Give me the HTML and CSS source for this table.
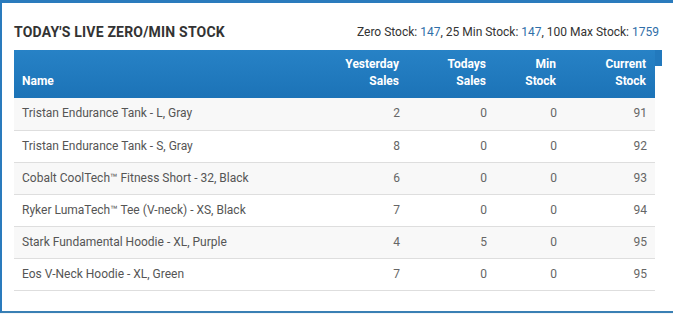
FILE: index.html
```html
<!DOCTYPE html>
<html>
<head>
<meta charset="utf-8">
<link rel="stylesheet" href="styles.css">
</head>
<body>
<div class="panel">
  <div class="panel-head">
    <h2 class="title">TODAY'S LIVE ZERO/MIN STOCK</h2>
    <div class="stats">Zero Stock: <span class="num">147</span>, 25 Min Stock: <span class="num">147</span>, 100 Max Stock: <span class="num">1759</span></div>
  </div>
  <div class="table-wrap">
    <span class="head-tab"></span>
    <table class="stock">
      <thead>
        <tr>
          <th class="name">Name</th>
          <th class="c1">Yesterday<br>Sales</th>
          <th class="c2">Todays<br>Sales</th>
          <th class="c3">Min<br>Stock</th>
          <th class="c4">Current<br>Stock</th>
        </tr>
      </thead>
      <tbody>
        <tr><td class="name">Tristan Endurance Tank - L, Gray</td><td>2</td><td>0</td><td>0</td><td>91</td></tr>
        <tr><td class="name">Tristan Endurance Tank - S, Gray</td><td>8</td><td>0</td><td>0</td><td>92</td></tr>
        <tr><td class="name">Cobalt CoolTech™ Fitness Short - 32, Black</td><td>6</td><td>0</td><td>0</td><td>93</td></tr>
        <tr><td class="name">Ryker LumaTech™ Tee (V-neck) - XS, Black</td><td>7</td><td>0</td><td>0</td><td>94</td></tr>
        <tr><td class="name">Stark Fundamental Hoodie - XL, Purple</td><td>4</td><td>5</td><td>0</td><td>95</td></tr>
        <tr><td class="name">Eos V-Neck Hoodie - XL, Green</td><td>7</td><td>0</td><td>0</td><td>95</td></tr>
      </tbody>
    </table>
  </div>
</div>
</body>
</html>
```
FILE: styles.css
```css
html, body {
  margin: 0;
  padding: 0;
  background: #f4f6f8;
  font-family: Roboto, "Liberation Sans", sans-serif;
}
.panel {
  background: #fff;
  border-top: 3px solid #2a7bbd;
  border-left: 2px solid #2a7bbd;
  border-bottom: 2px solid #3a80b4;
  height: 308px;
  box-sizing: content-box;
  padding: 0 18px 0 12px;
  width: 643px;
}
.panel-head {
  display: flex;
  justify-content: space-between;
  align-items: center;
  padding-top: 20px;
  height: 18px;
  margin-bottom: 9px;
}
.title {
  margin: 0;
  font-size: 14px;
  font-weight: 700;
  color: #333;
  letter-spacing: 0.2px;
}
.stats {
  font-size: 12px;
  color: #333;
  margin-right: -2px;
}
.num {
  color: #2f6ea8;
}
.table-wrap {
  position: relative;
  width: 641px;
}
.head-tab {
  position: absolute;
  left: 641px;
  top: 0;
  width: 7px;
  height: 16px;
  background: #2279bd;
}
.stock {
  width: 641px;
  border-collapse: collapse;
  font-size: 12px;
}
.stock thead th {
  background: linear-gradient(#2782c6, #1c73b7);
  color: #fff;
  font-weight: 700;
  text-align: right;
  vertical-align: bottom;
  line-height: 17px;
  padding: 6px 9px 8px 8px;
  height: 48px;
  box-sizing: border-box;
}
.stock thead th.name {
  text-align: left;
  padding-left: 8px;
}
.stock th.c1 { width: 100px; }
.stock th.c2 { width: 87px; }
.stock th.c3 { width: 70px; }
.stock th.c4 { width: 90px; }
.stock tbody td {
  text-align: right;
  color: #666;
  line-height: 17px;
  padding: 7px 8px 7px 8px;
  border-bottom: 1px solid #dedede;
  height: 32px;
  box-sizing: border-box;
}
.stock tbody td.name {
  text-align: left;
  color: #555;
}
.stock tbody tr:nth-child(odd) td {
  background: #f8f8f8;
}
```
